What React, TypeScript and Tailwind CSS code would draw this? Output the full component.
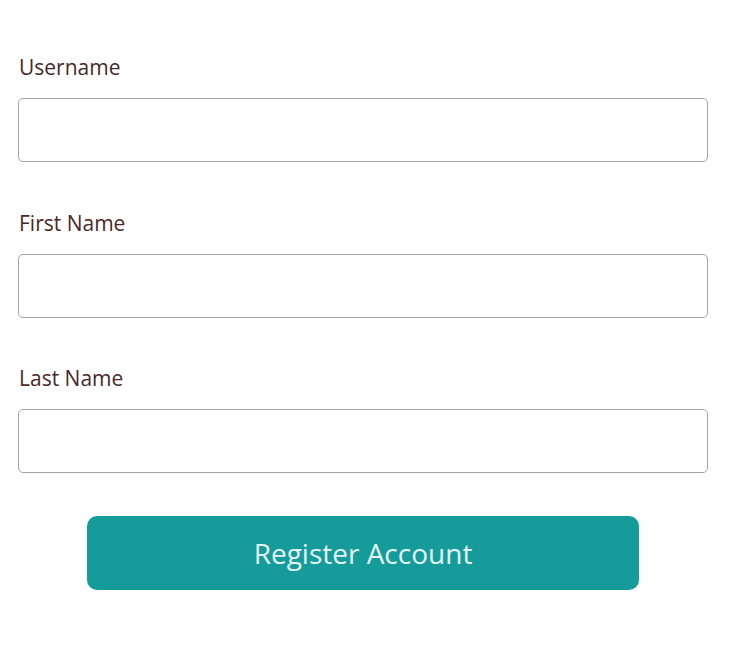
import React from 'react'

const fields = ['Username', 'First Name', 'Last Name']

export default function App() {
  return (
    <div className="min-h-screen bg-white pl-[18px] pr-[22px] pt-[52px] font-['Open_Sans',sans-serif]">
      {fields.map((f) => (
        <div key={f} className="mb-[45.5px]">
          <label className="block pl-px text-[21px] leading-[30px] text-[#4a2828]">{f}</label>
          <input
            type="text"
            className="mt-4 block h-16 w-full rounded-[5px] border border-[#a7a2ad] bg-white px-3 outline-none"
          />
        </div>
      ))}
      <div className="-mt-[2.5px] flex justify-center">
        <button className="h-[74px] w-[552px] rounded-[10px] bg-[#169b9b] text-[28px] text-[#e3f3f5]">
          Register Account
        </button>
      </div>
    </div>
  )
}
